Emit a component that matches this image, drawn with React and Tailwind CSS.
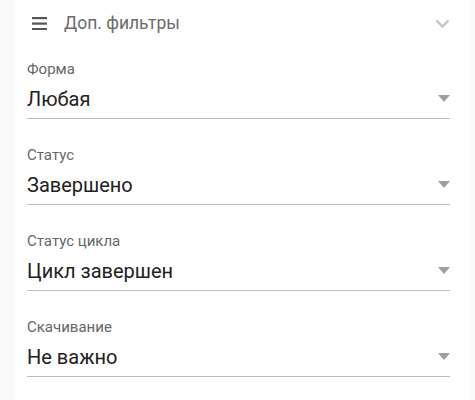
import React from "react";

const fields = [
  { label: "Форма", value: "Любая" },
  { label: "Статус", value: "Завершено" },
  { label: "Статус цикла", value: "Цикл завершен" },
  { label: "Скачивание", value: "Не важно" },
];

function Field({ label, value }) {
  return (
    <div className="pt-[18px]">
      <div className="text-[15px] leading-[20px] text-[#666666]">{label}</div>
      <div className="flex items-center justify-between h-[40px] border-b border-[#bdbdbd]">
        <span className="text-[20px] leading-[26px] text-[#212121]">{value}</span>
        <svg width="12" height="7" viewBox="0 0 12 7">
          <path d="M0 0 L12 0 L6 7 Z" fill="#9e9e9e" />
        </svg>
      </div>
      <div className="h-[8px]" />
    </div>
  );
}

export default function App() {
  return (
    <div className="min-h-[400px] bg-[#fafafa]" style={{ fontFamily: "Roboto, 'Noto Sans', sans-serif" }}>
      <div className="ml-[15px] w-[455px] min-h-[400px] bg-white">
        <div className="flex items-center h-[46px] pl-[17px] pr-[20px]">
          <svg width="15" height="14" viewBox="0 0 15 14" className="shrink-0">
            <rect x="0" y="1" width="15" height="2.2" fill="#555555" />
            <rect x="0" y="6.5" width="15" height="2.2" fill="#555555" />
            <rect x="0" y="12" width="15" height="2.2" fill="#555555" />
          </svg>
          <span className="ml-[17px] text-[17.5px] text-[#6b6b6b]">Доп. фильтры</span>
          <svg width="15" height="9" viewBox="0 0 15 9" className="ml-auto">
            <path d="M1.5 1.5 L7.5 7.5 L13.5 1.5" stroke="#c4c4c8" strokeWidth="2.4" fill="none" />
          </svg>
        </div>
        <div className="-mt-[5px] pl-[12px] pr-[20px]">
          {fields.map((f) => (
            <Field key={f.label} {...f} />
          ))}
        </div>
      </div>
    </div>
  );
}
